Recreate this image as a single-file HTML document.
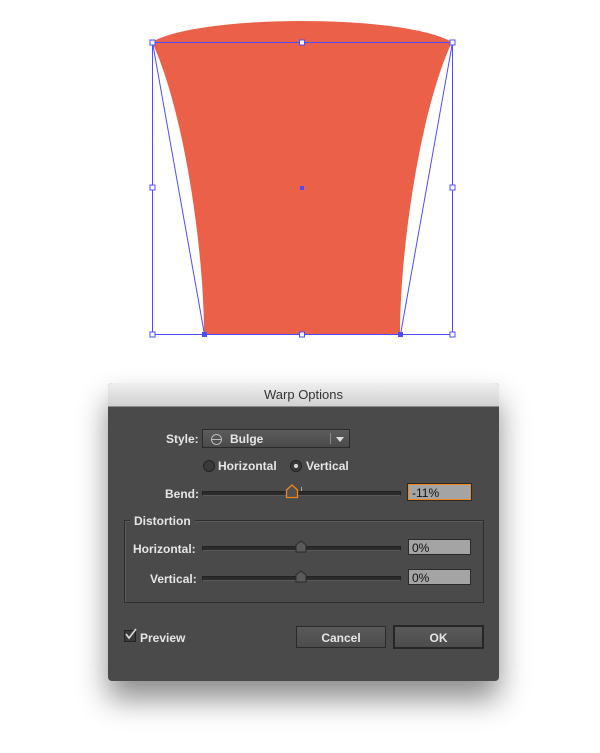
<!DOCTYPE html>
<html><head><style>
body{margin:0;width:600px;height:753px;background:#fff;position:relative;overflow:hidden;font-family:"Liberation Sans",sans-serif;}
.dlg{position:absolute;left:108px;top:383px;width:391px;height:298px;background:#4a4a4a;border-radius:4px;box-shadow:0 18px 30px rgba(0,0,0,.45);overflow:hidden;}
.title{height:23px;background:linear-gradient(#efefef,#d2d2d2);border-bottom:1px solid #8a8a8a;text-align:center;font-size:13px;line-height:23px;color:#333;}
.lbl{position:absolute;color:#e6e6e6;font-size:12px;font-weight:bold;}
.abs{position:absolute;}
.track{position:absolute;height:3px;background:#2b2b2b;border:1px solid #222;border-bottom-color:#5a5a5a;}
.field{position:absolute;width:63px;height:16px;background:#a4a4a4;border:1px solid #2a2a2a;font-size:12px;line-height:16px;padding-left:3px;box-sizing:border-box;color:#111;}
.btn{position:absolute;height:22px;background:linear-gradient(#5a5a5a,#4c4c4c);border:1px solid #2a2a2a;color:#e6e6e6;font-size:12px;font-weight:bold;text-align:center;line-height:22px;box-sizing:border-box;}
</style></head><body>
<svg class="abs" style="left:0;top:0" width="600" height="360">
<path d="M152,42 C200,14 404,14 452,42 C420,110 400,250 400,334 L204,334 C204,250 184,110 152,42 Z" fill="#ea6049"/>
<g stroke="#4d4dff" stroke-width="1" fill="none">
<rect x="152.5" y="42.5" width="300" height="292"/>
<line x1="152.5" y1="42.5" x2="204.5" y2="334.5"/>
<line x1="452.5" y1="42.5" x2="400.5" y2="334.5"/>
</g>
<g fill="#fff" stroke="#4d4dff">
<rect x="150" y="40" width="5" height="5"/><rect x="299.5" y="40" width="5" height="5"/><rect x="450" y="40" width="5" height="5"/>
<rect x="150" y="185" width="5" height="5"/><rect x="450" y="185" width="5" height="5"/>
<rect x="150" y="332" width="5" height="5"/><rect x="299.5" y="332" width="5" height="5"/><rect x="450" y="332" width="5" height="5"/>
</g>
<rect x="202" y="332" width="5" height="5" fill="#4d4dff"/><rect x="398" y="332" width="5" height="5" fill="#4d4dff"/>
<rect x="300" y="186" width="4" height="4" fill="#4d4dff"/>
</svg>
<div class="dlg">
<div class="title">Warp Options</div>
<div class="lbl" style="left:58px;top:49px">Style:</div>
<div class="abs" style="left:94px;top:46px;width:146px;height:17px;border:1px solid #2a2a2a;background:linear-gradient(#5c5c5c,#4a4a4a);"></div>
<div class="abs" style="left:103px;top:51px;width:9px;height:9px;border:1px solid #bbb;border-radius:50%;"></div>
<div class="abs" style="left:103px;top:56px;width:11px;height:1px;background:#bbb"></div>
<div class="lbl" style="left:122px;top:49px">Bulge</div>
<div class="abs" style="left:222px;top:50px;width:1px;height:11px;background:#888"></div>
<div class="abs" style="left:228px;top:54px;width:0;height:0;border-left:4px solid transparent;border-right:4px solid transparent;border-top:5px solid #ddd"></div>
<div class="abs" style="left:95px;top:77px;width:10px;height:10px;border-radius:50%;background:#3a3a3a;border:1px solid #222"></div>
<div class="lbl" style="left:110px;top:76px">Horizontal</div>
<div class="abs" style="left:182px;top:77px;width:10px;height:10px;border-radius:50%;background:#3a3a3a;border:1px solid #222"></div>
<div class="abs" style="left:186px;top:81px;width:4px;height:4px;border-radius:50%;background:#ddd"></div>
<div class="lbl" style="left:198px;top:76px">Vertical</div>
<div class="lbl" style="left:57px;top:104px">Bend:</div>
<div class="track" style="left:94px;top:108px;width:197px"></div>
<div class="abs" style="left:193px;top:104px;width:1px;height:4px;background:#aaa"></div>
<svg class="abs" style="left:177px;top:101px" width="14" height="15"><path d="M1.5,13.5 V6 L7,1 L12.5,6 V13.5 Z" fill="#505050" stroke="#f0861e" stroke-width="1.3"/></svg>
<div class="field" style="left:300px;top:101px;border:1px solid #f0861e;box-shadow:0 0 0 1px #2a2a2a;">-11%</div>
<div class="abs" style="left:16px;top:137px;width:358px;height:81px;border:1px solid #2e2e2e;box-shadow:1px 1px 0 #5a5a5a inset;"></div>
<div class="lbl" style="left:22px;top:131px;background:#4a4a4a;padding:0 4px">Distortion</div>
<div class="lbl" style="left:25px;top:159px">Horizontal:</div>
<div class="track" style="left:94px;top:163px;width:197px"></div>
<svg class="abs" style="left:187px;top:157px" width="12" height="13"><path d="M1,12 V5 L6,1 L11,5 V12 Z" fill="#5a5a5a" stroke="#2a2a2a"/></svg>
<div class="field" style="left:300px;top:156px">0%</div>
<div class="lbl" style="left:42px;top:189px">Vertical:</div>
<div class="track" style="left:94px;top:193px;width:197px"></div>
<svg class="abs" style="left:187px;top:187px" width="12" height="13"><path d="M1,12 V5 L6,1 L11,5 V12 Z" fill="#5a5a5a" stroke="#2a2a2a"/></svg>
<div class="field" style="left:300px;top:186px">0%</div>
<div class="abs" style="left:16px;top:247px;width:10px;height:10px;background:#3a3a3a;border:1px solid #222"></div>
<svg class="abs" style="left:16px;top:245px" width="14" height="13"><path d="M2,6 L5,10 L12,1" stroke="#ddd" stroke-width="1.6" fill="none"/></svg>
<div class="lbl" style="left:32px;top:248px">Preview</div>
<div class="btn" style="left:188px;top:243px;width:90px">Cancel</div>
<div class="btn" style="left:285px;top:242px;width:91px;height:24px;line-height:22px;border:2px solid #262626">OK</div>
</div>
</body></html>
